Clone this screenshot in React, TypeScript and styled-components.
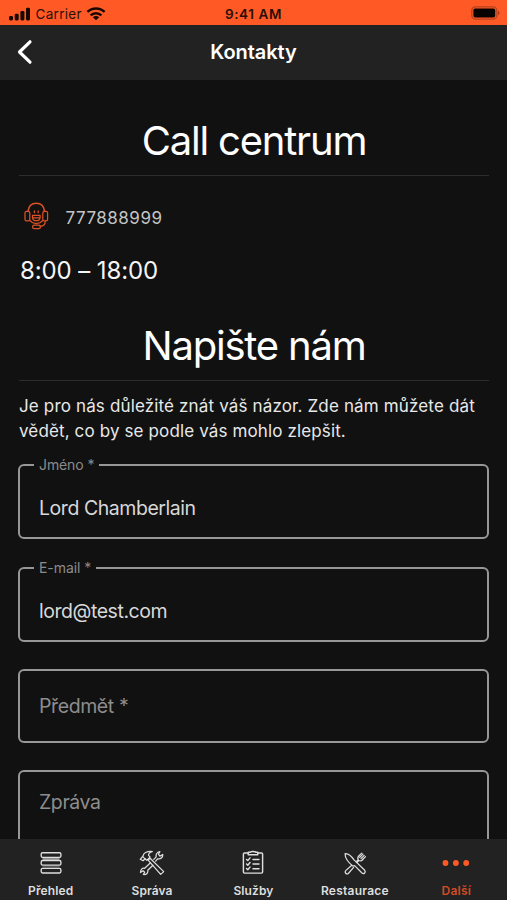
import React from "react";
import styled, { createGlobalStyle } from "styled-components";

const GlobalStyle = createGlobalStyle`
  *, *::before, *::after { box-sizing: border-box; }
  body { margin: 0; background: #111; }
`;

const Screen = styled.div`
  display: flex;
  flex-direction: column;
  width: 507px;
  height: 900px;
  overflow: hidden;
  background: #111;
  color: #fff;
  font-family: Inter, "Liberation Sans", sans-serif;
`;

const StatusBar = styled.header`
  display: grid;
  grid-template-columns: 1fr auto 1fr;
  align-items: center;
  flex: none;
  height: 25px;
  padding: 2px 6px 0 9px;
  background: #ff5a26;
  color: #2a0f06;
  font-size: 13.5px;
  line-height: 20px;
`;

const Signal = styled.div`
  display: flex;
  align-items: center;
  gap: 4.5px;
`;

const Carrier = styled.span`
  letter-spacing: 0.3px;
`;

const Clock = styled.time`
  font-weight: 600;
  font-size: 13.5px;
  letter-spacing: 0.6px;
  padding-right: 3px;
`;

const BatterySlot = styled.div`
  display: flex;
  justify-content: flex-end;
  padding-bottom: 1px;
`;

const NavBar = styled.nav`
  display: grid;
  grid-template-columns: 50px 1fr 50px;
  align-items: center;
  flex: none;
  height: 55px;
  background: #222;
`;

const BackButton = styled.button`
  display: flex;
  padding: 0 0 1px 15.5px;
  border: 0;
  background: none;
  color: #fff;
`;

const NavTitle = styled.h1`
  margin: 0;
  padding-bottom: 1px;
  text-align: center;
  font-size: 20px;
  line-height: 24px;
  font-weight: 600;
  letter-spacing: -0.05px;
`;

const Content = styled.main`
  flex: 1;
  min-height: 0;
  overflow: hidden;
  padding: 32px 18px 0;
`;

const SectionTitle = styled.h2<{ $tracking: number }>`
  margin: 0 0 0 1px;
  height: 64px;
  padding-top: 5px;
  border-bottom: 1.5px solid #2c2c2c;
  text-align: center;
  font-size: 40px;
  line-height: 48px;
  font-weight: 400;
  letter-spacing: ${(p) => p.$tracking}px;
`;

const PhoneRow = styled.a`
  display: flex;
  align-items: center;
  gap: 16.5px;
  margin-top: 24px;
  padding-left: 6px;
  height: 34px;
  color: #c4c4c4;
  font-size: 17px;
  letter-spacing: 0.5px;
`;

const PhoneIcon = styled.span`
  display: flex;
  padding-bottom: 2px;
`;

const PhoneNumber = styled.span`
  padding-top: 2px;
`;

const Hours = styled.p`
  margin: 21px 0 0 2px;
  padding-top: 0.5px;
  height: 30px;
  font-size: 24px;
  line-height: 30px;
  letter-spacing: -0.1px;
  color: #f5f5f5;
`;

const WriteSection = styled.section`
  margin-top: 32px;
`;

const Intro = styled.p`
  margin: 13px 0 0 1px;
  color: #e8e8e8;
  font-size: 17px;
  line-height: 24.5px;
`;

const IntroLine = styled.span<{ $tracking: number }>`
  display: block;
  white-space: nowrap;
  letter-spacing: ${(p) => p.$tracking}px;
`;

const Form = styled.form`
  display: flex;
  flex-direction: column;
  margin-top: 13px;
`;

const Outline = styled.fieldset<{ $height: number; $gap: number }>`
  flex: none;
  height: ${(p) => p.$height}px;
  min-width: 0;
  margin: 0 0 ${(p) => p.$gap}px;
  padding: 0 19px 0 14px;
  border: 2px solid #979797;
  border-radius: 6px;
`;

const Legend = styled.legend<{ $width: number }>`
  width: ${(p) => p.$width}px;
  padding: 0 0 0 5px;
  color: #8b8b8b;
  font-size: 14px;
  line-height: 18px;
  letter-spacing: ${(p) => (p.$width > 63 ? -0.1 : -0.05)}px;
  white-space: nowrap;
`;

const Value = styled.div<{ $muted?: boolean; $top: number; $tracking: number }>`
  padding: ${(p) => p.$top}px 0 0 5px;
  color: ${(p) => (p.$muted ? "#8d8d8d" : "#d8d8d8")};
  font-size: 19.5px;
  line-height: 24px;
  letter-spacing: ${(p) => p.$tracking}px;
`;

const TabBar = styled.footer`
  display: grid;
  grid-template-columns: repeat(5, 1fr);
  flex: none;
  height: 61px;
  background: #222;
`;

const Tab = styled.div<{ $active?: boolean }>`
  display: flex;
  flex-direction: column;
  align-items: center;
  padding-top: 9.5px;
  color: ${(p) => (p.$active ? "#ff5a26" : "#dedede")};
`;

const TabLabel = styled.span<{ $active?: boolean; $tracking: number }>`
  margin-top: 6.5px;
  color: ${(p) => (p.$active ? "#d14c23" : "#dedede")};
  font-size: 12px;
  line-height: 16px;
  font-weight: 600;
  letter-spacing: ${(p) => p.$tracking}px;
`;

const SignalIcon = () => (
  <svg width="22" height="14" viewBox="0 0 22 14" fill="#170802">
    <rect x="0" y="9" width="4" height="4.4" rx="1.3" />
    <rect x="5.7" y="6.8" width="4" height="6.6" rx="1.3" />
    <rect x="11.4" y="4" width="4" height="9.4" rx="1.3" />
    <rect x="17" y="0.7" width="4" height="12.7" rx="1.3" />
  </svg>
);

const WifiIcon = () => (
  <svg width="20" height="14" viewBox="0 0 20 14" fill="none" stroke="#170802" strokeWidth="2.5">
    <path d="M1.4 4.9C6.2.2 13.8.2 18.6 4.9" />
    <path d="M4.6 8.3c3-2.9 7.8-2.9 10.8 0" />
    <path d="M10 13.3 6.8 10.2c1.8-1.6 4.6-1.6 6.4 0z" fill="#170802" stroke="none" />
  </svg>
);

const BatteryIcon = () => (
  <svg width="30" height="14" viewBox="0 0 30 14">
    <rect x="0.8" y="0.8" width="25" height="12.4" rx="3.6" fill="none" stroke="#b8421d" strokeWidth="1.3" />
    <rect x="2.4" y="2.5" width="21.8" height="9" rx="1.8" fill="#080301" />
    <path d="M27 4.8c1.9.6 1.9 3.8 0 4.4z" fill="#a83c1a" />
  </svg>
);

const BackIcon = () => (
  <svg width="18" height="26" viewBox="0 0 18 26" fill="none" stroke="currentColor" strokeWidth="3.2" strokeLinecap="round" strokeLinejoin="round">
    <path d="M14 2.8 3.5 13 14 23.2" />
  </svg>
);

const SupportIcon = () => (
  <svg width="25" height="28" viewBox="0 0 25 28" fill="none" stroke="#dc5226" strokeWidth="1.25" strokeLinecap="round" strokeLinejoin="round">
    <path strokeWidth="1.6" d="M4 9.4C4.6 4.2 8 1.3 12.3 1.3s7.7 2.9 8.3 8.1" />
    <rect x="1" y="9.3" width="4.8" height="9.6" rx="1.6" />
    <rect x="18.8" y="9.3" width="4.8" height="9.6" rx="1.6" />
    <path d="M6 18.7c1.4 1.7 3.6 2.8 6.3 2.8s4.9-1.1 6.3-2.8M10.4 8.9v1.7M14.2 8.9v1.7" />
    <path d="M8.5 13.4h7.6v1.5c0 2.3-1.5 3.8-3.8 3.8s-3.8-1.5-3.8-3.8zM9 15.9h6.6" />
    <path d="M21.2 19.3c0 3.2-1.8 5-5 5" />
    <rect x="8.6" y="23" width="7.8" height="3.6" rx="1.7" />
  </svg>
);

const ListIcon = () => (
  <svg width="28" height="28" viewBox="0 0 28 28" fill="none" stroke="currentColor" strokeWidth="1.35">
    <path d="M5.5 9h17v2h-17z" fill="#8b8b8b" stroke="none" />
    <path d="M5.5 17h17v1.5h-17z" fill="#555" stroke="none" />
    <rect x="4.2" y="3.7" width="19.7" height="4.6" rx="1.4" />
    <rect x="4.2" y="11.5" width="19.7" height="4.6" rx="1.4" />
    <rect x="4.2" y="19.4" width="19.7" height="4.6" rx="1.4" />
  </svg>
);

const ToolsIcon = () => (
  <svg width="28" height="28" viewBox="0 0 28 28" fill="none" stroke="currentColor" strokeWidth="1.25" strokeLinejoin="round" strokeLinecap="round">
    <path d="M2.2 10.3 5.1 7c.1-2.8 3.4-5 9.3-4.5-3 1.2-4.2 2.3-3.8 3.8l1.5 1.8-3.3 3.2-1.8-1.5-1.9 1.9z" />
    <path d="m10.1 11.2 2-1.9L25.7 22.6l-3 2.8zM5.2 8.1l2.2 2" />
    <path d="m15.8 10.4 2.4-2.5c-.7-2.4.8-4.9 3.7-5.2l-1.5 2.5 1.5 1.9 2.9-1.6c.2 3-2.3 4.9-5 4.3l-2.2 2.3M12.5 13.8l-5.8 5.5c-2.5-.6-4.3 1.3-4.2 4.2L5 21.8l1.7 1.5-1.3 2.2c3.2.2 5-1.6 4.4-4.3l5.1-5" />
  </svg>
);

const ClipboardIcon = () => (
  <svg width="28" height="28" viewBox="0 0 28 28" fill="none" stroke="currentColor" strokeWidth="1.45" strokeLinecap="round" strokeLinejoin="round">
    <path d="M8.8 3.9H5.5c-.7 0-1.1.4-1.1 1.1v18c0 .7.4 1.1 1.1 1.1h17c.7 0 1.1-.4 1.1-1.1V5c0-.7-.4-1.1-1.1-1.1h-3.3" />
    <path d="M9.2 3.2h2.2c.5-.9 4.7-.9 5.2 0h2.2v2.5H9.2z" />
    <path d="m7.6 10.4 1.2 1.2 2.2-2.7M7.6 15l1.2 1.2 2.2-2.7M7.6 19.6l1.2 1.2 2.2-2.7M14 10.5h6M14 15h6M14 19.7h6" />
  </svg>
);

const CutleryIcon = () => (
  <svg width="28" height="28" viewBox="0 0 28 28" fill="none" stroke="currentColor" strokeWidth="1.25" strokeLinecap="round" strokeLinejoin="round">
    <path d="M4.1 4.6c2.8-.3 6.4 2.5 8.9 6.3l10.7 10.4c1.6 1.9-.8 4.3-2.7 2.7L13.6 16.6l-1.8.4C7.4 13.4 3.9 9.3 4.1 4.6z" />
    <path d="m15.7 12.3 1.5-1.5c-.9-1.8-.3-3.1 1-4.3l2.6-2.4M23.2 6.4 20 9.6M21.9 5.1l-3.2 3.3M24.5 7.6l-3.2 3.2M24.5 7.6c0 .2-1 1.2-2.8 3.1-1.2 1.3-2.5 1.5-3.8.8l-2 2M10.5 16.5 4.7 21.6c-1.6 1.8.7 4.3 2.6 2.9l5.3-6.1" />
  </svg>
);

const MoreIcon = () => (
  <svg width="28" height="28" viewBox="0 0 28 28" fill="currentColor">
    <circle cx="3.5" cy="14" r="2.9" />
    <circle cx="13.9" cy="14" r="2.9" />
    <circle cx="24.2" cy="14" r="2.9" />
  </svg>
);

const tabs = [
  { label: "Přehled", Icon: ListIcon, tracking: 0.12 },
  { label: "Správa", Icon: ToolsIcon, tracking: 0.08 },
  { label: "Služby", Icon: ClipboardIcon, tracking: 0.12 },
  { label: "Restaurace", Icon: CutleryIcon, tracking: 0.25 },
  { label: "Další", Icon: MoreIcon, tracking: 0.2, active: true },
];

export default function App() {
  return (
    <Screen>
      <GlobalStyle />
      <StatusBar>
        <Signal>
          <SignalIcon />
          <Carrier>Carrier</Carrier>
          <WifiIcon />
        </Signal>
        <Clock>9:41 AM</Clock>
        <BatterySlot>
          <BatteryIcon />
        </BatterySlot>
      </StatusBar>
      <NavBar>
        <BackButton type="button" aria-label="Zpět">
          <BackIcon />
        </BackButton>
        <NavTitle>Kontakty</NavTitle>
      </NavBar>
      <Content>
        <SectionTitle $tracking={-1.2}>Call centrum</SectionTitle>
        <PhoneRow>
          <PhoneIcon>
            <SupportIcon />
          </PhoneIcon>
          <PhoneNumber>777888999</PhoneNumber>
        </PhoneRow>
        <Hours>8:00 – 18:00</Hours>
        <WriteSection>
          <SectionTitle $tracking={-1.2}>Napište nám</SectionTitle>
          <Intro>
            <IntroLine $tracking={0.15}>Je pro nás důležité znát váš názor. Zde nám můžete dát</IntroLine>
            <IntroLine $tracking={0.13}>vědět, co by se podle vás mohlo zlepšit.</IntroLine>
          </Intro>
          <Form>
            <Outline $height={83} $gap={20}>
              <Legend $width={65}>Jméno *</Legend>
              <Value $top={22} $tracking={-0.45}>Lord Chamberlain</Value>
            </Outline>
            <Outline $height={83} $gap={27}>
              <Legend $width={62}>E-mail *</Legend>
              <Value $top={22} $tracking={-0.45}>lord@test.com</Value>
            </Outline>
            <Outline $height={74} $gap={27}>
              <Value $muted $top={23} $tracking={-0.4}>Předmět *</Value>
            </Outline>
            <Outline $height={120} $gap={0}>
              <Value $muted $top={18} $tracking={-0.4}>Zpráva</Value>
            </Outline>
          </Form>
        </WriteSection>
      </Content>
      <TabBar>
        {tabs.map(({ label, Icon, tracking, active }) => (
          <Tab key={label} $active={active}>
            <Icon />
            <TabLabel $active={active} $tracking={tracking}>
              {label}
            </TabLabel>
          </Tab>
        ))}
      </TabBar>
    </Screen>
  );
}
